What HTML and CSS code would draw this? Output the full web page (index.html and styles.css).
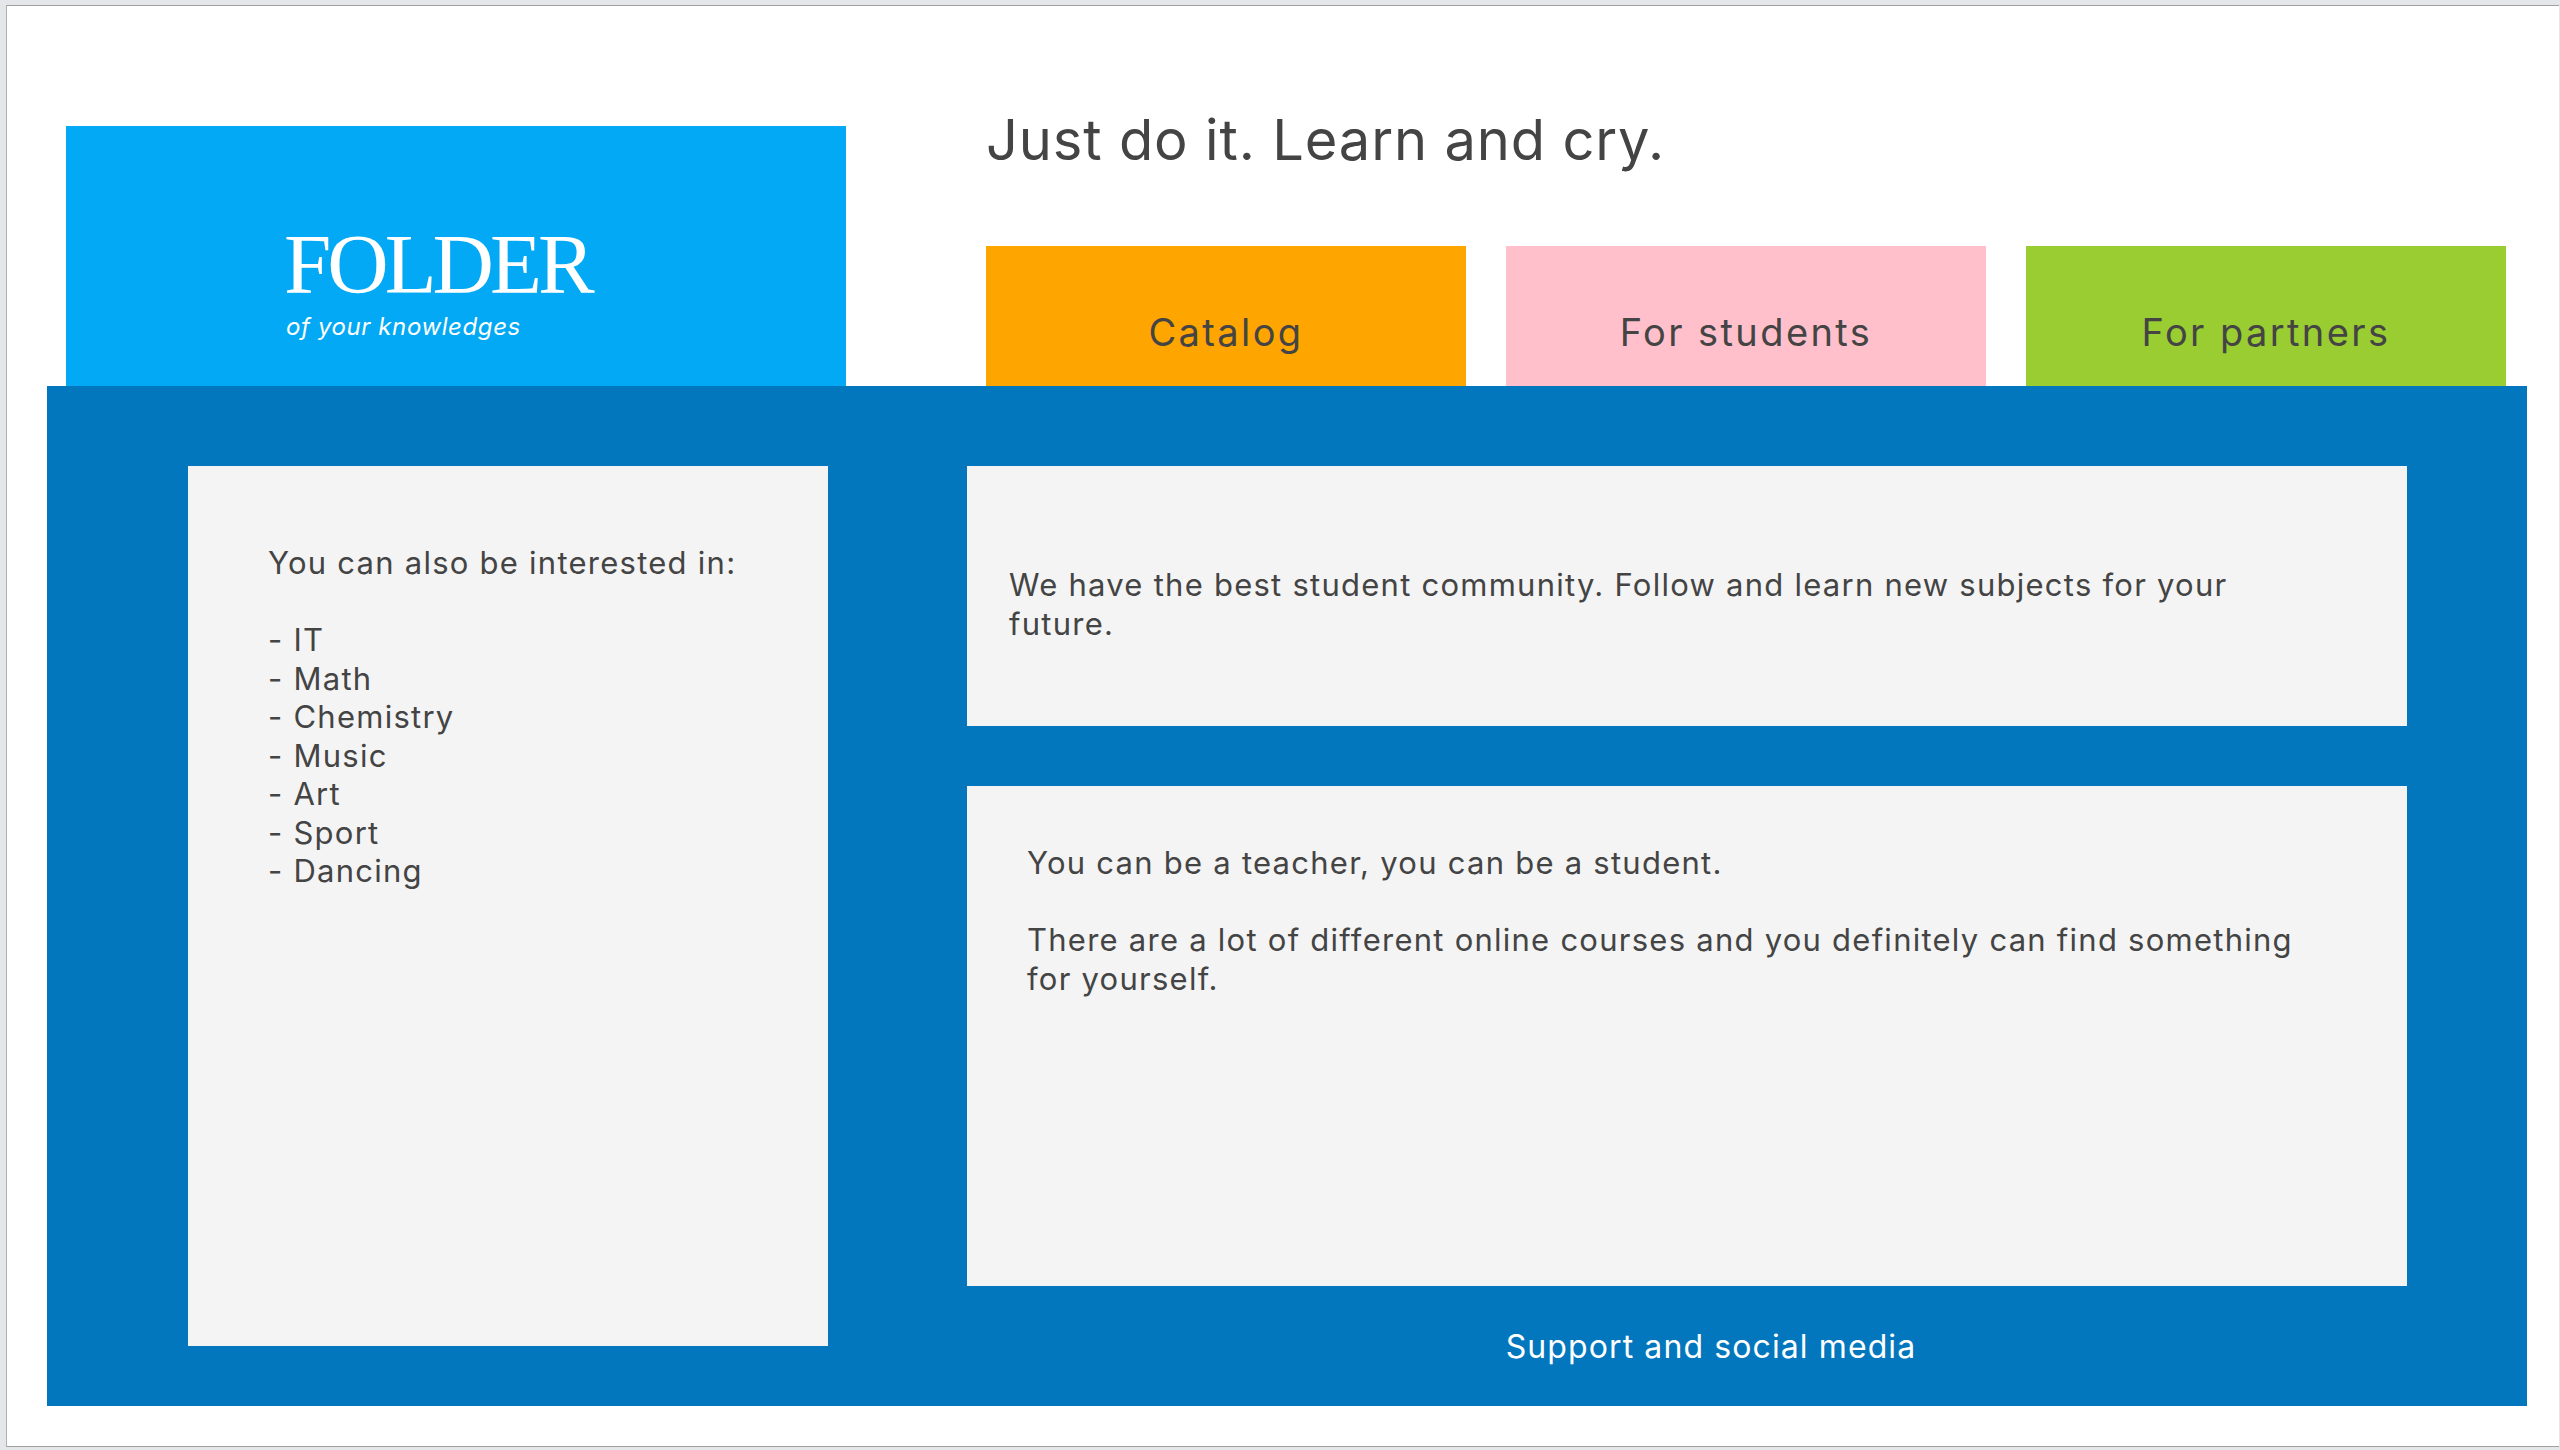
FILE: index.html
```html
<!DOCTYPE html>
<html lang="en">
<head>
<meta charset="utf-8">
<title>Folder</title>
<link rel="stylesheet" href="styles.css">
</head>
<body>
<div class="window">
  <header class="header">
    <div class="logo">
      <div class="logo-title">FOLDER</div>
      <div class="logo-sub">of your knowledges</div>
    </div>
    <div class="head-right">
      <h1 class="slogan">Just do it. Learn and cry.</h1>
      <nav class="nav">
        <a class="tile tile-orange">Catalog</a>
        <a class="tile tile-pink">For students</a>
        <a class="tile tile-green">For partners</a>
      </nav>
    </div>
  </header>
  <main class="main">
    <aside class="card card-side">
      <p>You can also be interested in:<br><br>- IT<br>- Math<br>- Chemistry<br>- Music<br>- Art<br>- Sport<br>- Dancing</p>
    </aside>
    <section class="col">
      <div class="card card-top">
        <p>We have the best student community. Follow and learn new subjects for your future.</p>
      </div>
      <div class="card card-bottom">
        <p>You can be a teacher, you can be a student.<br><br>There are a lot of different online courses and you definitely can find something for yourself.</p>
      </div>
      <footer class="footer">Support and social media</footer>
    </section>
  </main>
</div>
</body>
</html>
```
FILE: styles.css
```css
html, body {
  margin: 0;
  padding: 0;
}
body {
  background: #e4e6e9;
  font-family: "Inter", "Open Sans", sans-serif;
  color: #444;
}
.window {
  margin: 5px 1px 2px 6px;
  height: 1442px;
  box-sizing: border-box;
  background: #fff;
  border-top: 1px solid #a0a0a0;
  border-left: 1px solid #b0b0b0;
  border-bottom: 1px solid #a0a0a0;
  overflow: hidden;
}
.header {
  display: flex;
  align-items: flex-end;
  height: 380px;
}
.logo {
  margin-left: 59px;
  width: 780px;
  height: 260px;
  box-sizing: border-box;
  background: #03a9f4;
  color: #fff;
  padding: 96px 0 0 218px;
}
.logo-title {
  font-family: "Liberation Serif", "Times New Roman", serif;
  font-size: 85px;
  line-height: 85px;
  letter-spacing: -4px;
}
.logo-sub {
  font-style: italic;
  font-size: 24px;
  line-height: 28px;
  letter-spacing: 0.6px;
  margin-top: 6px;
  margin-left: 2px;
}
.head-right {
  margin-left: 140px;
  width: 1520px;
  display: flex;
  flex-direction: column;
}
.slogan {
  margin: 0 0 72px;
  font-weight: 400;
  font-size: 56px;
  line-height: 68px;
  letter-spacing: 0.85px;
  color: #444;
}
.nav {
  display: flex;
  gap: 40px;
}
.tile {
  width: 480px;
  height: 140px;
  box-sizing: border-box;
  padding-top: 63px;
  text-align: center;
  font-size: 38px;
  line-height: 46px;
  letter-spacing: 2.4px;
  color: #444;
}
.tile-orange { background: #ffa500; }
.tile-pink { background: #ffc0cb; }
.tile-green { background: #9acd32; }
.main {
  margin-left: 40px;
  width: 2480px;
  height: 1020px;
  box-sizing: border-box;
  background: #0277bd;
  padding: 80px 120px 0 141px;
  display: flex;
  gap: 139px;
  align-items: flex-start;
}
.card {
  background: #f4f4f4;
  box-sizing: border-box;
}
.card p {
  margin: 0;
  font-size: 31px;
  line-height: 38.5px;
  letter-spacing: 1.25px;
}
.card-side {
  width: 640px;
  height: 880px;
  padding: 78px 20px 0 80px;
}
.col {
  width: 1440px;
  display: flex;
  flex-direction: column;
}
.card-top {
  height: 260px;
  padding: 100px 40px 0 42px;
}
.card-top p {
  max-width: 1280px;
}
.card-bottom {
  margin-top: 60px;
  height: 500px;
  padding: 58px 60px 0 60px;
}
.card-bottom p {
  max-width: 1310px;
}
.footer {
  height: 120px;
  display: flex;
  align-items: center;
  justify-content: center;
  padding-left: 48px;
  color: #fff;
  font-size: 32px;
  letter-spacing: 1.1px;
}
```
